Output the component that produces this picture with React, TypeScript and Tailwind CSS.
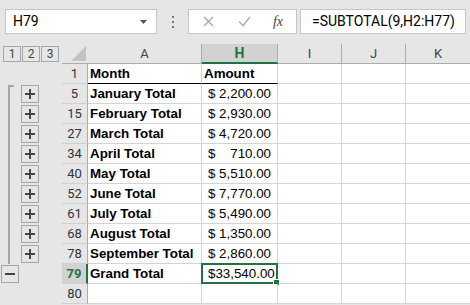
import React from 'react';

type Row = { n: number; month: string; amount: string; plus?: boolean };

const rows: Row[] = [
  { n: 1, month: 'Month', amount: '' },
  { n: 5, month: 'January Total', amount: '2,200.00', plus: true },
  { n: 15, month: 'February Total', amount: '2,930.00', plus: true },
  { n: 27, month: 'March Total', amount: '4,720.00', plus: true },
  { n: 34, month: 'April Total', amount: '710.00', plus: true },
  { n: 40, month: 'May Total', amount: '5,510.00', plus: true },
  { n: 52, month: 'June Total', amount: '7,770.00', plus: true },
  { n: 61, month: 'July Total', amount: '5,490.00', plus: true },
  { n: 68, month: 'August Total', amount: '1,350.00', plus: true },
  { n: 78, month: 'September Total', amount: '2,860.00', plus: true },
  { n: 79, month: 'Grand Total', amount: '33,540.00' },
  { n: 80, month: '', amount: '' },
];

const uiFont = "font-['Roboto','Liberation_Sans',sans-serif]";
const cellFont = "font-['Liberation_Sans',Arial,sans-serif]";

const OutlineButton: React.FC<{ label: string }> = ({ label }) => (
  <div className="w-[18px] h-[18px] border border-[#a6a6a6] flex items-center justify-center">
    {label === '+' ? (
      <svg width="10" height="10" viewBox="0 0 10 10">
        <rect x="4" y="0" width="2" height="10" fill="#444" />
        <rect x="0" y="4" width="10" height="2" fill="#444" />
      </svg>
    ) : (
      <svg width="10" height="10" viewBox="0 0 10 10">
        <rect x="0" y="4" width="10" height="2" fill="#444" />
      </svg>
    )}
  </div>
);

const FormulaBar: React.FC = () => (
  <div className={`h-[44px] flex items-start pt-[9px] ${uiFont}`}>
    <div className="ml-[5px] w-[152px] h-[25px] bg-white border border-[#c6c6c6] flex items-center pl-[7px] pr-[9px] text-[14px] text-black">
      <span className="flex-1">H79</span>
      <svg width="7" height="4" viewBox="0 0 7 4">
        <path d="M0 0 L7 0 L3.5 4 Z" fill="#555" />
      </svg>
    </div>
    <div className="w-[31px] h-[25px] flex flex-col items-center justify-center gap-[3px]">
      <div className="w-[2px] h-[2px] bg-[#777]" />
      <div className="w-[2px] h-[2px] bg-[#777]" />
      <div className="w-[2px] h-[2px] bg-[#777]" />
    </div>
    <div className="w-[109px] h-[25px] bg-white border border-[#c6c6c6] flex items-center">
      <div className="w-[37px] flex justify-center pl-[2px]">
        <svg width="11" height="11" viewBox="0 0 11 11">
          <path d="M1 1 L10 10 M10 1 L1 10" stroke="#a6a6a6" strokeWidth="1.4" />
        </svg>
      </div>
      <div className="w-[36px] flex justify-center">
        <svg width="13" height="11" viewBox="0 0 13 11">
          <path d="M1 5.5 L5 9.5 L12 1" stroke="#b4b4b4" strokeWidth="1.6" fill="none" />
        </svg>
      </div>
      <div className="flex-1 flex justify-center pr-[2px] font-['Liberation_Serif',serif] italic text-[14px] text-[#444]">
        fx
      </div>
    </div>
    <div className="ml-[3px] w-[166px] h-[25px] bg-white border border-[#c6c6c6] flex items-center pl-[11px] text-[14px] text-black">
      =SUBTOTAL(9,H2:H77)
    </div>
  </div>
);

const HeaderRow: React.FC = () => (
  <div className={`flex h-[20px] ${uiFont} text-[13px] text-[#444]`}>
    <div className="w-[62px] flex items-center pl-[3px] gap-[1px]">
      {['1', '2', '3'].map((l) => (
        <div
          key={l}
          className="w-[18px] h-[16px] border border-[#a6a6a6] flex items-center justify-center text-[12px] text-[#444]"
        >
          {l}
        </div>
      ))}
    </div>
    <div className="w-[26px] border-b border-[#ababab] flex items-end justify-end pr-[2px] pb-[2px]">
      <svg width="15" height="15" viewBox="0 0 15 15">
        <path d="M15 0 L15 15 L0 15 Z" fill="#c3c3c3" />
      </svg>
    </div>
    <div className="w-[114px] border-b border-r border-[#ababab] flex items-center justify-center">A</div>
    <div className="w-[76px] bg-[#d2d2d2] border-b-2 border-[#217346] border-r border-r-[#ababab] flex items-center justify-center text-[#217346] font-bold text-[14px]">
      H
    </div>
    <div className="w-[64px] border-b border-r border-[#ababab] flex items-center justify-center">I</div>
    <div className="w-[64px] border-b border-r border-[#ababab] flex items-center justify-center">J</div>
    <div className="w-[64px] border-b border-[#ababab] flex items-center justify-center">K</div>
  </div>
);

const OutlineCell: React.FC<{ row: Row }> = ({ row }) => {
  if (row.n === 79) {
    return (
      <div className="w-[62px] flex pl-[1px] pt-[1px]">
        <OutlineButton label="-" />
      </div>
    );
  }
  return (
    <div className="w-[62px] flex">
      <div className="w-[8px]" />
      {row.plus && (
        <>
          <div
            className={`w-[13px] border-l-2 border-[#a6a6a6] ${row.n === 5 ? 'mt-[1px]' : ''}`}
          >
            {row.n === 5 && <div className="w-[4px] border-t-2 border-[#a6a6a6]" />}
          </div>
          <div className="pt-[1px]">
            <OutlineButton label="+" />
          </div>
        </>
      )}
    </div>
  );
};

const GridRow: React.FC<{ row: Row }> = ({ row }) => {
  const selected = row.n === 79;
  const first = row.n === 1;
  return (
    <div className="flex h-[20px]">
      <OutlineCell row={row} />
      <div
        className={`w-[26px] flex items-center justify-center ${uiFont} text-[13px] ${
          selected
            ? 'bg-[#d2d2d2] text-[#217346] font-bold border-r-2 border-[#217346]'
            : 'text-[#333] border-r border-[#ababab]'
        } border-b border-b-[#d0d0d0]`}
      >
        {row.n}
      </div>
      <div
        className={`w-[114px] bg-white border-r border-[#d4d4d4] ${
          first ? 'border-b border-b-black' : 'border-b border-b-[#d4d4d4]'
        } flex items-center pl-[2px] ${cellFont} text-[13.33px] font-bold text-black`}
      >
        {row.month}
      </div>
      <div
        className={`w-[76px] relative bg-white border-r border-[#d4d4d4] ${
          first ? 'border-b border-b-black' : 'border-b border-b-[#d4d4d4]'
        } flex items-center ${cellFont} text-[13.33px] text-black ${
          first ? 'font-bold pl-[2px]' : 'pl-[6px] pr-[6px]'
        }`}
      >
        {first ? (
          'Amount'
        ) : row.amount ? (
          <>
            <span>$</span>
            <span className="flex-1 text-right">{row.amount}</span>
          </>
        ) : null}
        {selected && (
          <>
            <div className="absolute -left-[1px] -top-[1px] -right-[1px] -bottom-[1px] border-2 border-[#217346]" />
            <div className="absolute -right-[3px] -bottom-[3px] w-[5px] h-[5px] bg-[#217346] border border-white box-content" />
          </>
        )}
      </div>
      <div className="w-[64px] bg-white border-r border-b border-[#d4d4d4]" />
      <div className="w-[64px] bg-white border-r border-b border-[#d4d4d4]" />
      <div className="w-[64px] bg-white border-b border-[#d4d4d4]" />
    </div>
  );
};

const App: React.FC = () => {
  return (
    <div className="w-[470px] h-[305px] bg-[#e6e6e6] overflow-hidden">
      <FormulaBar />
      <HeaderRow />
      {rows.map((row) => (
        <GridRow key={row.n} row={row} />
      ))}
    </div>
  );
};

export default App;
